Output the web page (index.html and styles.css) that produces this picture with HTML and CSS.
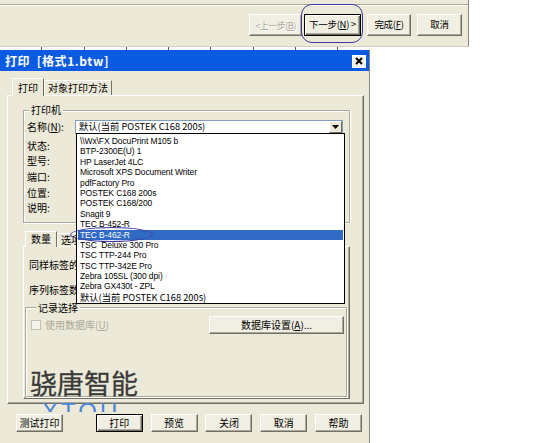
FILE: index.html
```html
<!DOCTYPE html>
<html>
<head>
<meta charset="utf-8">
<link rel="stylesheet" href="styles.css">
</head>
<body>
<div class="wizard">
  <div class="sep"></div>
  <div class="wbtns">
    <div class="btn w-prev disabled">&lt;上一步(<u>B</u>)</div>
    <div class="btn w-next default">下一步(<u>N</u>) &gt;</div>
    <div class="btn w-finish">完成(<u>F</u>)</div>
    <div class="btn w-cancel">取消</div>
  </div>
</div>
<div class="ticks"></div>
<div class="dialog">
  <div class="title">
    <span class="title-text">打印&nbsp; [格式1.btw]</span>
    <span class="close"><svg width="8" height="8" viewBox="0 0 8 8"><path d="M1 1 L7 7 M7 1 L1 7" stroke="#000" stroke-width="2"/></svg></span>
  </div>
  <div class="tabs">
    <div class="tab active">打印</div>
    <div class="tab">对象打印方法</div>
  </div>
  <div class="panel">
    <fieldset class="group printer">
      <legend>打印机</legend>
      <div class="name-row">
        <span class="lbl">名称(<u>N</u>):</span>
        <div class="combo">
          <span class="combo-text">默认(当前 POSTEK C168 200s)</span>
          <span class="arrow"><svg width="7" height="4" viewBox="0 0 7 4"><path d="M0 0 H7 L3.5 4 Z" fill="#000"/></svg></span>
          <ul class="dropdown">
            <li>\\Wx\FX DocuPrint M105 b</li>
            <li>BTP-2300E(U) 1</li>
            <li>HP LaserJet 4LC</li>
            <li>Microsoft XPS Document Writer</li>
            <li>pdfFactory Pro</li>
            <li>POSTEK C168 200s</li>
            <li>POSTEK C168/200</li>
            <li>Snagit 9</li>
            <li>TEC B-452-R</li>
            <li class="sel">TEC B-462-R</li>
            <li>TSC&nbsp; Deluxe 300 Pro</li>
            <li>TSC TTP-244 Pro</li>
            <li>TSC TTP-342E Pro</li>
            <li>Zebra 105SL (300 dpi)</li>
            <li>Zebra GX430t - ZPL</li>
            <li class="cjk">默认(当前 POSTEK C168 200s)</li>
          </ul>
        </div>
      </div>
      <div class="info-rows">
        <div class="row"><span class="lbl">状态:</span></div>
        <div class="row"><span class="lbl">型号:</span></div>
        <div class="row"><span class="lbl">端口:</span></div>
        <div class="row"><span class="lbl">位置:</span></div>
        <div class="row"><span class="lbl">说明:</span></div>
      </div>
    </fieldset>
    <div class="tabs sub">
      <div class="tab active">数量</div>
      <div class="tab">选项</div>
    </div>
    <div class="subpanel">
      <div class="srow first">同样标签的份数(<u>C</u>):</div>
      <div class="srow">序列标签数(<u>S</u>):</div>
      <fieldset class="group records">
        <legend>记录选择</legend>
        <div class="rec-row">
          <span class="chk"><span class="box"></span>使用数据库(<u>U</u>)</span>
          <div class="btn dbset">数据库设置(<u>A</u>)...</div>
        </div>
      </fieldset>
    </div>
  </div>
  <div class="dbtns">
    <div class="btn dbtn">测试打印</div>
    <div class="btn dbtn default print">打印</div>
    <div class="btn dbtn">预览</div>
    <div class="btn dbtn">关闭</div>
    <div class="btn dbtn">取消</div>
    <div class="btn dbtn">帮助</div>
  </div>
</div>
<div class="watermark">
  <div class="wm-cn">骁唐智能</div>
  <div class="wm-en"><span>XTOU</span></div>
</div>
<div class="ring ring-next"></div>
<div class="ring ring-tec"></div>
</body>
</html>
```
FILE: styles.css
```css
* { box-sizing: border-box; }
html, body { margin: 0; padding: 0; }
body {
  width: 533px;
  height: 443px;
  overflow: hidden;
  position: relative;
  background: #fff;
  font-family: "Noto Sans CJK SC", "Liberation Sans", sans-serif;
  font-size: 10px;
  color: #000;
}
u { text-decoration: underline; }

/* generic classic button */
.btn {
  display: flex;
  align-items: center;
  justify-content: center;
  background: #f1efe4;
  border: 1px solid;
  border-color: #fff #716f64 #716f64 #fff;
  box-shadow: inset -1px -1px 0 #aca899;
  font-size: 10px;
  line-height: 1;
  white-space: nowrap;
}
.btn.default {
  border: 1px solid #000;
  box-shadow: inset 1px 1px 0 #fff, inset -1px -1px 0 #716f64, inset -2px -2px 0 #aca899;
}
.btn.disabled { color: #aca899; text-shadow: 1px 1px 0 #fff; }

/* wizard window at top */
.wizard {
  width: 469px;
  height: 47px;
  background: #ece9d8;
  border-right: 1px solid #8a877a;
  border-bottom: 1px solid #d6d2c2;
  overflow: hidden;
}
.sep {
  height: 2px;
  margin-top: 4px;
  border-top: 1px solid #aca899;
  border-bottom: 1px solid #fff;
}
.wbtns {
  display: flex;
  justify-content: flex-end;
  margin-top: 8px;
  padding-right: 6px;
}
.wbtns .btn {
  height: 22px;
  font-size: 9.5px;
  letter-spacing: -0.3px;
}
.wbtns .w-prev {
  width: 53px;
  font-size: 9px;
  letter-spacing: -0.5px;
}
.w-next { width: 57px; margin-left: 2px; }
.w-finish { width: 44px; margin-left: 6px; }
.w-cancel { width: 45px; margin-left: 6px; }

.ticks {
  width: 364px;
  height: 3px;
  background: repeating-linear-gradient(to right, transparent 0 41.3px, #555 41.3px 42.3px);
}

/* print dialog */
.dialog {
  position: relative;
  width: 370px;
  height: 393px;
  background: #ece9d8;
  border-right: 1px solid #8a877a;
}
.title {
  height: 21px;
  background: #0a5be2;
  color: #fff;
  display: flex;
  align-items: center;
  justify-content: space-between;
  padding: 0 3px 0 5px;
}
.title-text {
  font-weight: bold;
  font-size: 12px;
  letter-spacing: 0.6px;
}
.close {
  width: 14px;
  height: 13px;
  margin-top: 1px;
  background: #f4f2ea;
  border: 1px solid #fff;
  display: flex;
  align-items: center;
  justify-content: center;
}

.tabs {
  display: flex;
  align-items: flex-end;
  height: 17px;
  margin-top: 7px;
  padding-left: 12px;
  position: relative;
  z-index: 1;
}
.tab {
  height: 15px;
  padding: 0 3px;
  border: 1px solid;
  border-bottom: none;
  border-color: #fff #716f64 transparent #fff;
  display: flex;
  align-items: center;
  font-size: 10px;
  line-height: 1;
  background: #ece9d8;
}
.tab.active {
  height: 18px;
  margin-bottom: -1px;
  padding: 0 5px;
}

.panel {
  margin-left: 7px;
  width: 357px;
  height: 309px;
  border: 1px solid;
  border-color: #fff #716f64 #716f64 #fff;
  box-shadow: inset -1px -1px 0 #aca899;
  padding-left: 15px;
  padding-top: 8px;
}

.group {
  margin: 0;
  padding: 0;
  min-width: 0;
  border: 1px solid #aca899;
  box-shadow: 1px 1px 0 #fff, inset 1px 1px 0 #fff;
}
.group legend {
  margin-left: 5px;
  padding: 0 2px;
  font-size: 10px;
  line-height: 12px;
  height: 12px;
  background: #ece9d8;
}

.printer {
  width: 327px;
  padding: 4px 0 6px 0;
}
.lbl {
  display: inline-block;
  width: 51px;
  padding-left: 3px;
  font-size: 10px;
  line-height: 1;
}
.name-row {
  display: flex;
  align-items: center;
  height: 14px;
}
.combo {
  position: relative;
  width: 268px;
  height: 14px;
  background: #fff;
  border: 1px solid #7f9db9;
  display: flex;
  align-items: center;
  justify-content: space-between;
  z-index: 5;
}
.combo-text {
  padding-left: 3px;
  font-size: 9.3px;
  line-height: 1;
}
.arrow {
  width: 13px;
  height: 12px;
  background: #ece9d8;
  border: 1px solid;
  border-color: #fff #716f64 #716f64 #fff;
  display: flex;
  align-items: center;
  justify-content: center;
}
.dropdown {
  position: absolute;
  top: 100%;
  left: 0;
  width: 269px;
  height: 171px;
  margin: 0;
  padding: 2px 1px 0 1px;
  list-style: none;
  background: #fff;
  border: 1px solid #000;
}
.dropdown li {
  height: 10.4px;
  line-height: 10.4px;
  padding-left: 2px;
  font-family: "Liberation Sans", sans-serif;
  font-size: 8.5px;
  letter-spacing: -0.1px;
  white-space: nowrap;
}
.dropdown li.cjk {
  font-family: "Noto Sans CJK SC", "Liberation Sans", sans-serif;
  font-size: 9.3px;
  letter-spacing: 0;
}
.dropdown li.sel {
  background: #316ac5;
  color: #fff;
}
.info-rows { margin-top: 4px; }
.row {
  height: 15.6px;
  display: flex;
  align-items: center;
}

.tabs.sub {
  margin-top: 8px;
  height: 15px;
  padding-left: 2px;
}
.tabs.sub .tab { height: 13px; }
.tabs.sub .tab.active { height: 16px; }

.subpanel {
  width: 327px;
  height: 153px;
  border: 1px solid;
  border-color: #fff #716f64 #716f64 #fff;
  box-shadow: inset -1px -1px 0 #aca899;
  padding-top: 12px;
}
.srow {
  height: 13px;
  padding-left: 5px;
  display: flex;
  align-items: center;
  font-size: 10px;
  line-height: 1;
  margin-top: 11.5px;
}
.srow.first { margin-top: 0; }

.records {
  margin: 5.5px 2px 0 1px;
  height: 95px;
  padding: 2px 2px 0 5px;
}
.rec-row {
  display: flex;
  align-items: center;
  justify-content: space-between;
  height: 18px;
}
.chk {
  display: flex;
  align-items: center;
  color: #aca899;
  font-size: 10px;
  line-height: 1;
}
.box {
  width: 10px;
  height: 10px;
  border: 1px solid #c5c2b2;
  background: #f4f3ee;
  margin-right: 4px;
}
.dbset {
  width: 135px;
  height: 18px;
}

.dbtns {
  display: flex;
  gap: 7.8px;
  margin-top: 10px;
  padding-left: 16px;
}
.dbtn {
  width: 47px;
  height: 18px;
}
.dbtn.print { margin-left: 25px; }

/* watermark overlay */
.watermark {
  position: absolute;
  left: 30px;
  top: 369px;
  pointer-events: none;
}
.wm-cn {
  font-size: 27px;
  line-height: 27px;
  color: #3a3a3a;
  white-space: nowrap;
  -webkit-text-stroke: 0.3px #3a3a3a;
}
.wm-en {
  margin-top: 4px;
  margin-left: 12px;
  height: 12px;
  overflow: hidden;
}
.wm-en span {
  display: block;
  font-family: "Liberation Sans", sans-serif;
  font-size: 24px;
  line-height: 24px;
  letter-spacing: 3px;
  color: #4a86d8;
}

/* annotation rings */
.ring {
  position: absolute;
  border: 1px solid #3c3c9c;
  pointer-events: none;
}
.ring-next {
  left: 301px;
  top: 4px;
  width: 62px;
  height: 39px;
  border-radius: 11px;
}
.ring-tec {
  left: 70px;
  top: 227px;
  width: 83px;
  height: 15px;
  border-radius: 50%;
  z-index: 10;
}
```
